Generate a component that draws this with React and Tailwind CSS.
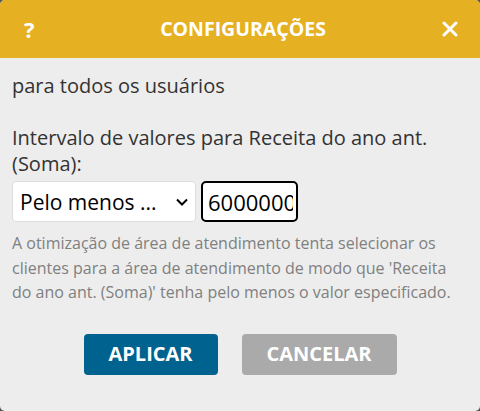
export default function App() {
  return (
    <div className="w-[480px] h-[411px] bg-[#555] overflow-hidden" style={{ fontFamily: '"Open Sans", sans-serif' }}>
      <div className="w-full h-full rounded-[5px] overflow-hidden bg-[#ededed] flex flex-col">
        <div className="h-[58px] bg-[#e6b023] flex items-center pl-[24px] pr-[22px] text-white">
          <span className="w-[20px] text-[22px] font-bold">?</span>
          <span className="flex-1 text-center text-[19.5px] font-bold">CONFIGURAÇÕES</span>
          <svg width="16" height="16" viewBox="0 0 16 16">
            <path d="M2 2L14 14M14 2L2 14" stroke="white" strokeWidth="3" strokeLinecap="round" />
          </svg>
        </div>
        <div className="px-[12px] pt-[15px] text-[#333] text-[20px] leading-[26px]">
          <p>para todos os usuários</p>
          <p className="mt-[26px] pr-[12px]">Intervalo de valores para Receita do ano ant. (Soma):</p>
          <div className="flex gap-[5px] mt-[4px]">
            <div className="w-[184px] h-[41px] bg-white border border-[#ddd] rounded-[4px] flex items-center justify-between pl-[7px] pr-[6px] text-[21px] text-black">
              <span>Pelo menos ...</span>
              <svg width="14" height="10" viewBox="0 0 14 10">
                <path d="M2 2.5L7 7.5L12 2.5" stroke="black" strokeWidth="2" fill="none" />
              </svg>
            </div>
            <div className="w-[97px] h-[41px] bg-white border-2 border-black rounded-[5px] flex items-center pl-[5px] pr-[3px] overflow-hidden text-[22px] text-black whitespace-nowrap">
              <span className="block overflow-hidden">6000000</span>
            </div>
          </div>
          <p className="mt-[9px] text-[16px] leading-[24.5px] text-[#808080]">
            A otimização de área de atendimento tenta selecionar os clientes para a área de atendimento de modo que 'Receita do ano ant. (Soma)' tenha pelo menos o valor especificado.
          </p>
          <div className="flex justify-center gap-[24px] mt-[29px]">
            <div className="w-[134px] h-[41px] rounded-[4px] bg-[#00628f] text-white font-bold text-[20px] flex items-center justify-center">APLICAR</div>
            <div className="w-[155px] h-[41px] rounded-[4px] bg-[#aaaaaa] text-white font-bold text-[20px] flex items-center justify-center">CANCELAR</div>
          </div>
        </div>
      </div>
    </div>
  );
}
